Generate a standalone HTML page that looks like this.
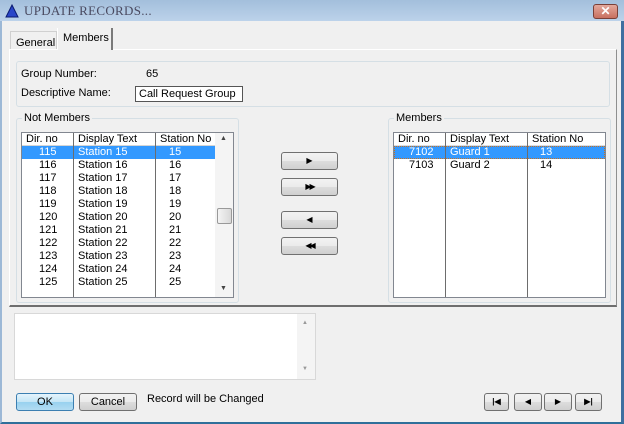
<!DOCTYPE html>
<html><head><style>
*{box-sizing:border-box;margin:0;padding:0}
body{width:624px;height:424px;overflow:hidden;background:#f0f0f0;font-family:"Liberation Sans",sans-serif;font-size:11px;color:#000;position:relative}
.a{position:absolute}
.title{left:0;top:0;width:624px;height:21px;background:linear-gradient(#a3bfdc,#bcd2ea)}
.win{left:0;top:21px;width:624px;height:403px;border-left:2px solid #9cb8d6;border-right:3px solid #3e6fa0;border-bottom:2px solid #2f6f9a}
.grp{border:1px solid #d5dfe5;border-radius:3px}
.list{background:#fff;border:1px solid #828790}
.hdr{top:0;height:13px;border-bottom:1px solid #d5d5d5;background:#fff}
.vl{width:1px;background:#6d6d6d;top:0;bottom:0}
.btn{border:1px solid #707070;border-radius:3px;background:linear-gradient(#f2f2f2 0,#ebebeb 50%,#dddddd 51%,#cfcfcf 100%);text-align:center;line-height:16px}
</style></head><body>
<div class="a title"></div>
<svg class="a" style="left:5px;top:4px" width="14" height="14"><polygon points="7,1 13,13 1,13" fill="#2a46c8" stroke="#0a1a70"/></svg>
<div class="a" style="left:24px;top:3px;font-family:'Liberation Serif',serif;font-size:13px;color:#4a4a60;letter-spacing:0.3px">UPDATE RECORDS...</div>
<div class="a" style="left:593px;top:4px;width:25px;height:15px;border:1px solid #7a4038;border-radius:3px;background:linear-gradient(#e3a89c,#c87060);color:#fff;font-weight:bold;text-align:center;line-height:13px;font-size:12px">✕</div>
<div class="a win"></div>
<div class="a" style="left:9px;top:49px;width:608px;height:258px;border:1px solid #fff;border-right:1px solid #8e8f8f;border-bottom:2px solid #6e6e6e"></div>
<div class="a" style="left:10px;top:31px;width:47px;height:18px;border:1px solid #d0d0d0;border-bottom:none;padding:5px 0 0 5px">General</div>
<div class="a" style="left:57px;top:28px;width:56px;height:22px;border-left:1px solid #fff;border-right:2px solid #7a7a7a;background:#f0f0f0;padding:4px 0 0 5px">Members</div>
<div class="a grp" style="left:16px;top:61px;width:594px;height:46px"></div>
<div class="a" style="left:21px;top:68px">Group Number:</div>
<div class="a" style="left:146px;top:68px">65</div>
<div class="a" style="left:21px;top:87px">Descriptive Name:</div>
<div class="a" style="left:135px;top:86px;width:108px;height:16px;border:1px solid #555;background:#fff;padding:1px 0 0 3px">Call Request Group</div>
<div class="a grp" style="left:16px;top:118px;width:223px;height:185px"></div>
<div class="a" style="left:22px;top:112px;background:#f0f0f0;padding:0 2px">Not Members</div>
<div class="a list" style="left:21px;top:132px;width:213px;height:166px">
 <div class="a hdr" style="left:0;width:193px"></div>
 <div class="a" style="left:4px;top:0">Dir. no</div><div class="a" style="left:56px;top:0">Display Text</div><div class="a" style="left:138px;top:0">Station No</div>
 <div class="a" style="left:0;top:13px;width:193px;height:13px;background:#3399ff"></div>
 <div class="a" style="left:51px;top:0;width:1px;height:164px;background:#6d6d6d"></div><div class="a" style="left:133px;top:0;width:1px;height:164px;background:#6d6d6d"></div>
 <div class="a" style="left:193px;top:0;width:18px;height:164px;background:#f4f4f4"></div>
 <div class="a" style="left:198px;top:2px;font-size:7px;color:#444">▲</div>
 <div class="a" style="left:198px;top:152px;font-size:7px;color:#444">▼</div>
 <div class="a" style="left:195px;top:75px;width:15px;height:16px;border:1px solid #999;border-radius:2px;background:linear-gradient(90deg,#f4f4f4,#d8d8d8)"></div>
 <div class="a" style="left:0;top:13px;width:193px;line-height:13px">
  <div style="color:#fff;position:relative;height:13px"><span class="a" style="left:17px">115</span><span class="a" style="left:56px">Station 15</span><span class="a" style="left:147px">15</span></div>
  <div style="position:relative;height:13px"><span class="a" style="left:17px">116</span><span class="a" style="left:56px">Station 16</span><span class="a" style="left:147px">16</span></div>
  <div style="position:relative;height:13px"><span class="a" style="left:17px">117</span><span class="a" style="left:56px">Station 17</span><span class="a" style="left:147px">17</span></div>
  <div style="position:relative;height:13px"><span class="a" style="left:17px">118</span><span class="a" style="left:56px">Station 18</span><span class="a" style="left:147px">18</span></div>
  <div style="position:relative;height:13px"><span class="a" style="left:17px">119</span><span class="a" style="left:56px">Station 19</span><span class="a" style="left:147px">19</span></div>
  <div style="position:relative;height:13px"><span class="a" style="left:17px">120</span><span class="a" style="left:56px">Station 20</span><span class="a" style="left:147px">20</span></div>
  <div style="position:relative;height:13px"><span class="a" style="left:17px">121</span><span class="a" style="left:56px">Station 21</span><span class="a" style="left:147px">21</span></div>
  <div style="position:relative;height:13px"><span class="a" style="left:17px">122</span><span class="a" style="left:56px">Station 22</span><span class="a" style="left:147px">22</span></div>
  <div style="position:relative;height:13px"><span class="a" style="left:17px">123</span><span class="a" style="left:56px">Station 23</span><span class="a" style="left:147px">23</span></div>
  <div style="position:relative;height:13px"><span class="a" style="left:17px">124</span><span class="a" style="left:56px">Station 24</span><span class="a" style="left:147px">24</span></div>
  <div style="position:relative;height:13px"><span class="a" style="left:17px">125</span><span class="a" style="left:56px">Station 25</span><span class="a" style="left:147px">25</span></div>
 </div>
</div>
<div class="a btn" style="left:281px;top:152px;width:57px;height:18px;font-size:8px">▶</div>
<div class="a btn" style="left:281px;top:178px;width:57px;height:18px;font-size:8px;letter-spacing:-2px">▶▶</div>
<div class="a btn" style="left:281px;top:211px;width:57px;height:18px;font-size:8px">◀</div>
<div class="a btn" style="left:281px;top:237px;width:57px;height:18px;font-size:8px;letter-spacing:-2px">◀◀</div>
<div class="a grp" style="left:388px;top:118px;width:223px;height:185px"></div>
<div class="a" style="left:394px;top:112px;background:#f0f0f0;padding:0 2px">Members</div>
<div class="a list" style="left:393px;top:132px;width:213px;height:166px">
 <div class="a" style="left:0;top:13px;width:211px;height:13px;background:#3399ff;outline:1px dotted #c87020;outline-offset:-1px"></div>
 <div class="a" style="left:0;top:0;width:211px;height:13px;border-bottom:1px solid #ddd"></div>
 <div class="a" style="left:51px;top:0;width:1px;height:164px;background:#6d6d6d"></div><div class="a" style="left:133px;top:0;width:1px;height:164px;background:#6d6d6d"></div>
 <div class="a" style="left:4px;top:0">Dir. no</div><div class="a" style="left:56px;top:0">Display Text</div><div class="a" style="left:138px;top:0">Station No</div>
 <div class="a" style="left:15px;top:13px;color:#fff">7102</div><div class="a" style="left:56px;top:13px;color:#fff">Guard 1</div><div class="a" style="left:146px;top:13px;color:#fff">13</div>
 <div class="a" style="left:15px;top:26px">7103</div><div class="a" style="left:56px;top:26px">Guard 2</div><div class="a" style="left:146px;top:26px">14</div>
</div>
<div class="a" style="left:14px;top:313px;width:302px;height:67px;background:#fff;border:1px solid #d8d8d8"></div>
<div class="a" style="left:297px;top:314px;width:18px;height:65px;background:#f4f4f4"></div>
<div class="a" style="left:302px;top:320px;font-size:6px;color:#999">▲</div>
<div class="a" style="left:302px;top:366px;font-size:6px;color:#999">▼</div>
<div class="a btn" style="left:16px;top:393px;width:58px;height:18px;border-color:#3c7fb1;background:linear-gradient(#e5f4fc,#c4e5f6 50%,#98d1ef 51%,#b2dcf2)">OK</div>
<div class="a btn" style="left:79px;top:393px;width:58px;height:18px">Cancel</div>
<div class="a" style="left:147px;top:393px">Record will be Changed</div>
<div class="a btn" style="left:484px;top:393px;width:25px;height:18px;font-size:8px;font-weight:bold">|◀</div>
<div class="a btn" style="left:514px;top:393px;width:28px;height:18px;font-size:8px">◀</div>
<div class="a btn" style="left:544px;top:393px;width:28px;height:18px;font-size:8px">▶</div>
<div class="a btn" style="left:575px;top:393px;width:27px;height:18px;font-size:8px;font-weight:bold">▶|</div>
</body></html>
